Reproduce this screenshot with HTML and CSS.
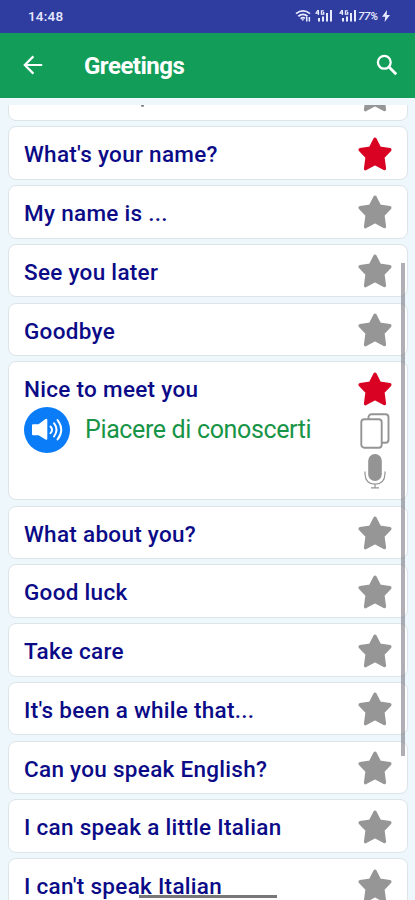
FILE: index.html
```html
<!DOCTYPE html>
<html lang="en">
<head>
<meta charset="utf-8">
<title>Greetings</title>
<link rel="stylesheet" href="styles.css">
</head>
<body>
<svg class="defs" width="0" height="0">
  <symbol id="star" viewBox="0 0 34 34">
    <path d="M17 2.2 L21.6 11.2 L31.8 12.8 L24.9 20.2 L26.4 31.6 L17 26.6 L7.600 31.600 L9.1 20.2 L2.2 12.8 L12.4 11.2 Z" fill="currentColor" stroke="currentColor" stroke-width="3.4" stroke-linejoin="round"/>
  </symbol>
  <symbol id="signal" viewBox="0 0 18 14">
    <path d="M3 1 L1 4.2 H4.2 M3.4 1 V6 M8.8 1.8 H6.4 V5.2 H8.8 V3.6 H7.8" fill="none" stroke="currentColor" stroke-width="1.2"/>
    <path d="M3 9h2v3.500H3z M7 7.5h2v5H7z M11 4h2v8.500h-2z M15 1h2v11.500h-2z" fill="currentColor"/>
  </symbol>
</svg>
<div class="screen">
  <div class="status">
    <span class="time">14:48</span>
    <svg class="wifi" viewBox="0 0 16 14"><path d="M1 4.6 Q8 -0.8 15 4.6 M3.3 7.2 Q8 3.6 12.5 7.2 M5.6 9.6 Q8 7.8 10 9.4" fill="none" stroke="currentColor" stroke-width="1.8"/><path d="M6.2 10.2h3L7.8 12z M11 8h1.5v4.500H11z M13.6 8h1.5v4.500h-1.5z" fill="currentColor"/></svg>
    <svg class="signal"><use href="#signal"/></svg>
    <svg class="signal second"><use href="#signal"/></svg>
    <span class="battery">77%</span>
    <svg class="bolt" viewBox="0 0 8 12"><path d="M5 0 L0 6.8 H3.2 L2.6 12 L8 5 H4.7 Z" fill="currentColor"/></svg>
  </div>
  <header class="bar">
    <svg class="back" viewBox="0 0 20 20"><path d="M19.2 10 H2 M10.4 1.4 L1.8 10 L10.4 18.6" fill="none" stroke="currentColor" stroke-width="2.2"/></svg>
    <h1>Greetings</h1>
    <svg class="search" viewBox="0 0 22 22"><circle cx="8.3" cy="8.3" r="6.4" fill="none" stroke="currentColor" stroke-width="2.3"/><path d="M13 13 L20.2 20.2" stroke="currentColor" stroke-width="2.8"/></svg>
  </header>
  <main class="viewport">
    <div class="list">
      <div class="card peek"><span class="phrase"></span><svg class="star"><use href="#star"/></svg></div>
      <div class="card"><span class="phrase">What's your name?</span><svg class="star on"><use href="#star"/></svg></div>
      <div class="card"><span class="phrase">My name is ...</span><svg class="star"><use href="#star"/></svg></div>
      <div class="card"><span class="phrase">See you later</span><svg class="star"><use href="#star"/></svg></div>
      <div class="card"><span class="phrase">Goodbye</span><svg class="star"><use href="#star"/></svg></div>
      <div class="card open">
        <div class="body">
          <span class="phrase">Nice to meet you</span>
          <div class="answer">
            <svg class="speaker" viewBox="0 0 46 46"><circle cx="23" cy="23" r="23" fill="#0a7cf8"/><path d="M9 17.3 H14.5 L21.5 12 Q23.3 11 23.3 13 V31.500 Q23.300 33.500 21.500 32.500 L14.500 28.200 H9 Q8 28.200 8 27.200 V18.300 Q8 17.300 9 17.300Z" fill="#fff"/><path d="M26.500 19.500 Q29.500 22.800 26.500 26.200 M30 16.200 Q35 22.800 30 29.500 M33.500 13 Q41 22.800 33.500 32.500" fill="none" stroke="#fff" stroke-width="2" stroke-linecap="round"/></svg>
            <span class="translation">Piacere di conoscerti</span>
          </div>
        </div>
        <div class="actions">
          <svg class="star on"><use href="#star"/></svg>
          <svg class="copy" viewBox="0 0 30 36"><g fill="#fff" stroke="#949494" stroke-width="1.900"><rect x="8.500" y="1.300" width="20" height="28.500" rx="3"/><rect x="1.300" y="6.300" width="20.400" height="28.400" rx="3"/></g></svg>
          <svg class="mic" viewBox="0 0 22 36"><rect x="4.200" y="1" width="13.600" height="27" rx="6.800" fill="#949494"/><path d="M1 18.500 V21 Q1.500 31.200 11 31.200 Q20.500 31.200 21 21 V18.500 M11 31 V34.600 M7 34.800 H15" fill="none" stroke="#949494" stroke-width="1.200"/></svg>
        </div>
      </div>
      <div class="card"><span class="phrase">What about you?</span><svg class="star"><use href="#star"/></svg></div>
      <div class="card"><span class="phrase">Good luck</span><svg class="star"><use href="#star"/></svg></div>
      <div class="card"><span class="phrase">Take care</span><svg class="star"><use href="#star"/></svg></div>
      <div class="card"><span class="phrase">It's been a while that...</span><svg class="star"><use href="#star"/></svg></div>
      <div class="card"><span class="phrase">Can you speak English?</span><svg class="star"><use href="#star"/></svg></div>
      <div class="card"><span class="phrase">I can speak a little Italian</span><svg class="star"><use href="#star"/></svg></div>
      <div class="card"><span class="phrase">I can't speak Italian</span><svg class="star"><use href="#star"/></svg></div>
    </div>
  </main>
  <div class="scrollbar"></div>
  <div class="home"></div>
</div>
</body>
</html>
```

FILE: styles.css
```css
* { box-sizing: border-box; }
body { margin: 0; font-family: Roboto, sans-serif; }
svg { display: block; flex: none; }
.defs { position: absolute; }
.screen {
  position: relative;
  width: 415px;
  height: 900px;
  overflow: hidden;
  display: flex;
  flex-direction: column;
  background: #edf7fc;
}
.status {
  height: 32.5px;
  flex: none;
  display: flex;
  align-items: center;
  padding: 0 25px 0 28px;
  background: #303da0;
  color: #e8eaff;
}
.time { font-size: 13.5px; font-weight: 500; letter-spacing: .2px; margin-right: auto; }
.wifi { width: 16px; height: 14px; margin-right: 4px; }
.signal { width: 18px; height: 14px; }
.second { margin-left: 6px; }
.battery { font-size: 11.5px; font-weight: 500; font-style: italic; margin-left: 1px; width: 23px; letter-spacing: -.3px; }
.bolt { width: 8px; height: 12px; margin-left: 1px; }
.bar {
  height: 65px;
  flex: none;
  display: flex;
  align-items: center;
  padding: 0 17px 0 23px;
  background: #129e59;
  color: #fff;
}
.back { width: 20px; height: 20px; }
.bar h1 { margin: 0 auto 0 41px; padding-top: 2px; font-size: 24px; line-height: 30px; font-weight: 700; letter-spacing: -.5px; }
.search { width: 22px; height: 22px; }
.viewport { margin-top: 7.5px; flex: 1; min-height: 0; overflow: hidden; padding: 0 7.5px 0 8px; }
.list { display: flex; flex-direction: column; gap: 5.2px; margin-top: -37.6px; }
.card {
  height: 53.6px;
  flex: none;
  display: flex;
  justify-content: space-between;
  align-items: flex-start;
  padding: 9px 14px 0 15px;
  background: #fff;
  border: 1px solid #dde5e9;
  border-radius: 8px;
}
.phrase { color: #0b0b87; font-size: 22.5px; line-height: 36px; font-weight: 500; letter-spacing: .29px; white-space: nowrap; }
.star { width: 34px; height: 34px; margin: .5px 1px 1.5px; color: #969696; }
.star.on { color: #da0222; }
.peek .phrase { width: 3px; height: 2px; margin: 28px 0 0 117px; background: #888; border-radius: 0 0 2px 2px; }
.open { height: 139px; }
.answer { display: flex; align-items: center; gap: 15px; }
.speaker { width: 46px; height: 46px; margin-top: -1px; }
.translation { color: #189447; font-size: 25px; line-height: 46px; letter-spacing: -.36px; white-space: nowrap; }
.actions { display: flex; flex-direction: column; align-items: center; }
.copy { width: 30px; height: 36px; margin-top: 6px; }
.mic { width: 22px; height: 36px; margin-top: 4px; }
.scrollbar { position: absolute; left: 400.5px; top: 263px; width: 4.5px; height: 493px; background: rgba(110, 110, 120, .55); }
.home { position: absolute; left: 139px; top: 895px; width: 138px; height: 2.5px; background: #777; }
```
